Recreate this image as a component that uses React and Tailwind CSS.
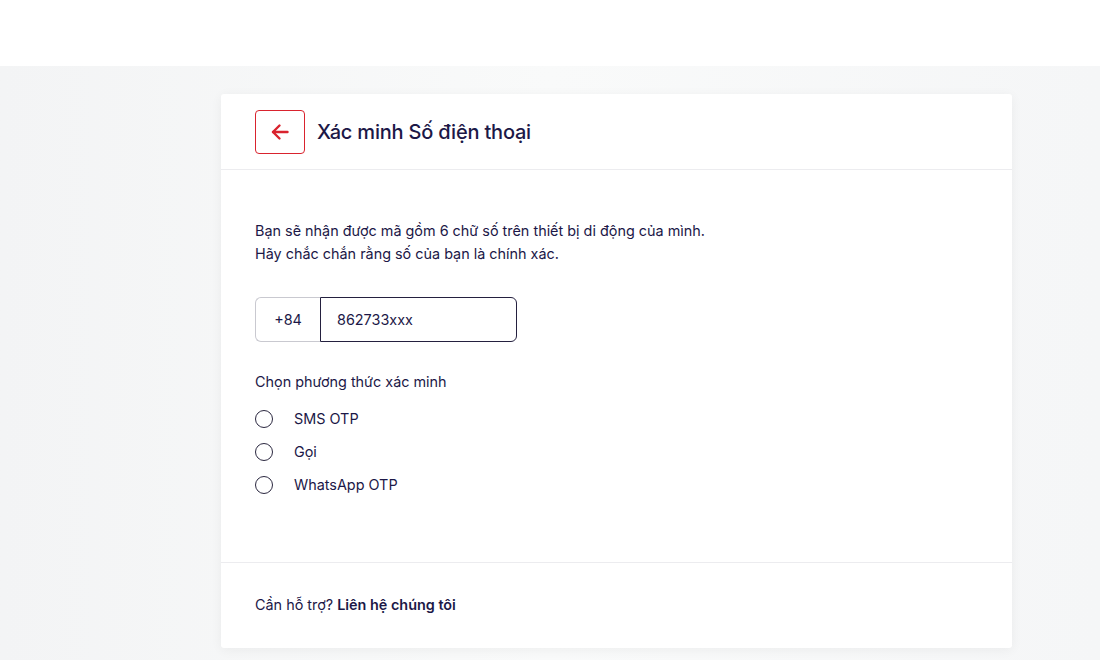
import React from 'react';

const methods = ['SMS OTP', 'Gọi', 'WhatsApp OTP'];

const App = () => {
  return (
    <div className="min-h-[660px] w-[1100px] bg-[#f5f6f7] text-[#1c1847]" style={{ fontFamily: 'Inter, "Noto Sans", sans-serif' }}>
      {/* top bar */}
      <div className="h-[66px] bg-white" />

      <div className="bg-gradient-to-r from-[#f3f4f5] via-[#f9fafa] to-[#f5f6f7] pt-[28px] pb-[12px]">
        <div className="ml-[221px] w-[791px] rounded-[3px] bg-white shadow-[0_2px_12px_rgba(0,0,0,0.05)]">
          {/* header */}
          <div className="flex h-[76px] items-center gap-3 border-b border-[#ececef] px-[34px]">
            <button className="flex h-[44px] w-[50px] items-center justify-center rounded-[4px] border border-[#d9232e]">
              <svg width="24" height="24" viewBox="0 0 24 24" fill="none" stroke="#d9232e" strokeWidth="2.4" strokeLinecap="round" strokeLinejoin="round">
                <path d="M19.5 12H5" />
                <path d="M11.5 5.5 5 12l6.5 6.5" />
              </svg>
            </button>
            <h1 className="text-[20px] font-medium tracking-[-0.2px]">Xác minh Số điện thoại</h1>
          </div>

          {/* body */}
          <div className="px-[34px] pt-[49px] pb-[66px] text-[14.4px]">
            <p className="leading-[23px]">
              Bạn sẽ nhận được mã gồm 6 chữ số trên thiết bị di động của mình.
              <br />
              Hãy chắc chắn rằng số của bạn là chính xác.
            </p>

            <div className="mt-[32px] flex h-[45px] w-[262px]">
              <div className="flex w-[65px] items-center justify-center rounded-l-[6px] border border-r-0 border-[#c9c9d0]">+84</div>
              <div className="flex flex-1 items-center rounded-r-[6px] border border-[#24203f] pl-[16px]">862733xxx</div>
            </div>

            <div className="mt-[29px]">Chọn phương thức xác minh</div>
            <div className="mt-[15px] flex flex-col gap-[11px]">
              {methods.map((m) => (
                <label key={m} className="flex h-[22px] items-center gap-[21px]">
                  <span className="h-[18px] w-[18px] rounded-full border-[1.5px] border-[#2b2840]" />
                  <span>{m}</span>
                </label>
              ))}
            </div>
          </div>

          {/* footer */}
          <div className="flex h-[86px] items-center border-t border-[#ececef] px-[34px] text-[14.4px]">
            <span>Cần hỗ trợ? </span>
            <a className="ml-1 font-semibold">Liên hệ chúng tôi</a>
          </div>
        </div>
      </div>
    </div>
  );
};

export default App;
